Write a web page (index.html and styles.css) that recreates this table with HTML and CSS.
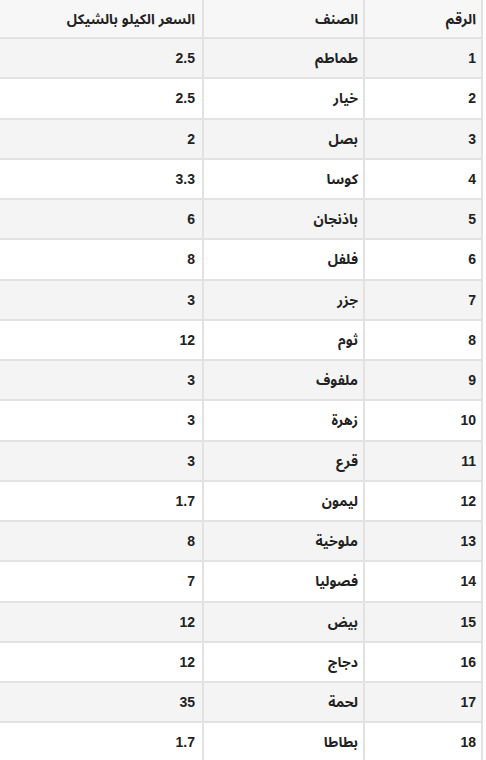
FILE: index.html
```html
<!DOCTYPE html>
<html lang="ar" dir="rtl">
<head>
<meta charset="utf-8">
<title>أسعار الخضار</title>
<link rel="stylesheet" href="styles.css">
</head>
<body>
<div class="wrap">
<table class="prices">
<thead>
<tr><th class="c-num">الرقم</th><th class="c-name">الصنف</th><th class="c-price">السعر الكيلو بالشيكل</th></tr>
</thead>
<tbody>
<tr><td class="c-num">1</td><td class="c-name">طماطم</td><td class="c-price">2.5</td></tr>
<tr><td class="c-num">2</td><td class="c-name">خيار</td><td class="c-price">2.5</td></tr>
<tr><td class="c-num">3</td><td class="c-name">بصل</td><td class="c-price">2</td></tr>
<tr><td class="c-num">4</td><td class="c-name">كوسا</td><td class="c-price">3.3</td></tr>
<tr><td class="c-num">5</td><td class="c-name">باذنجان</td><td class="c-price">6</td></tr>
<tr><td class="c-num">6</td><td class="c-name">فلفل</td><td class="c-price">8</td></tr>
<tr><td class="c-num">7</td><td class="c-name">جزر</td><td class="c-price">3</td></tr>
<tr><td class="c-num">8</td><td class="c-name">ثوم</td><td class="c-price">12</td></tr>
<tr><td class="c-num">9</td><td class="c-name">ملفوف</td><td class="c-price">3</td></tr>
<tr><td class="c-num">10</td><td class="c-name">زهرة</td><td class="c-price">3</td></tr>
<tr><td class="c-num">11</td><td class="c-name">قرع</td><td class="c-price">3</td></tr>
<tr><td class="c-num">12</td><td class="c-name">ليمون</td><td class="c-price">1.7</td></tr>
<tr><td class="c-num">13</td><td class="c-name">ملوخية</td><td class="c-price">8</td></tr>
<tr><td class="c-num">14</td><td class="c-name">فصوليا</td><td class="c-price">7</td></tr>
<tr><td class="c-num">15</td><td class="c-name">بيض</td><td class="c-price">12</td></tr>
<tr><td class="c-num">16</td><td class="c-name">دجاج</td><td class="c-price">12</td></tr>
<tr><td class="c-num">17</td><td class="c-name">لحمة</td><td class="c-price">35</td></tr>
<tr><td class="c-num">18</td><td class="c-name">بطاطا</td><td class="c-price">1.7</td></tr>
</tbody>
</table>
</div>
</body>
</html>
```
FILE: styles.css
```css
html, body {
  margin: 0;
  padding: 0;
  background: #ffffff;
}
body {
  direction: rtl;
  font-family: "Liberation Sans", "Noto Sans Arabic", "DejaVu Sans", sans-serif;
  font-size: 14px;
  font-weight: bold;
  color: #222222;
}
.wrap {
  padding-right: 3px;
}
.prices {
  width: 483px;
  border-collapse: separate;
  border-spacing: 0;
  table-layout: fixed;
}
.prices th,
.prices td {
  box-sizing: border-box;
  text-align: right;
  vertical-align: middle;
  padding: 0 5px;
  border-bottom: 2px solid #e2e2e2;
  border-left: 2px solid #e2e2e2;
  font-weight: bold;
  line-height: 18px;
}
.prices th {
  height: 39px;
  background: #f7f7f7;
}
.prices td {
  height: 40.25px;
}
.prices tbody tr:nth-child(odd) td {
  background: #f4f4f4;
}
.prices .c-num {
  width: 120px;
  border-right: 2px solid #e2e2e2;
}
.prices .c-name {
  width: 161px;
}
.prices .c-price {
  border-left: none;
  padding-right: 7px;
}
```
